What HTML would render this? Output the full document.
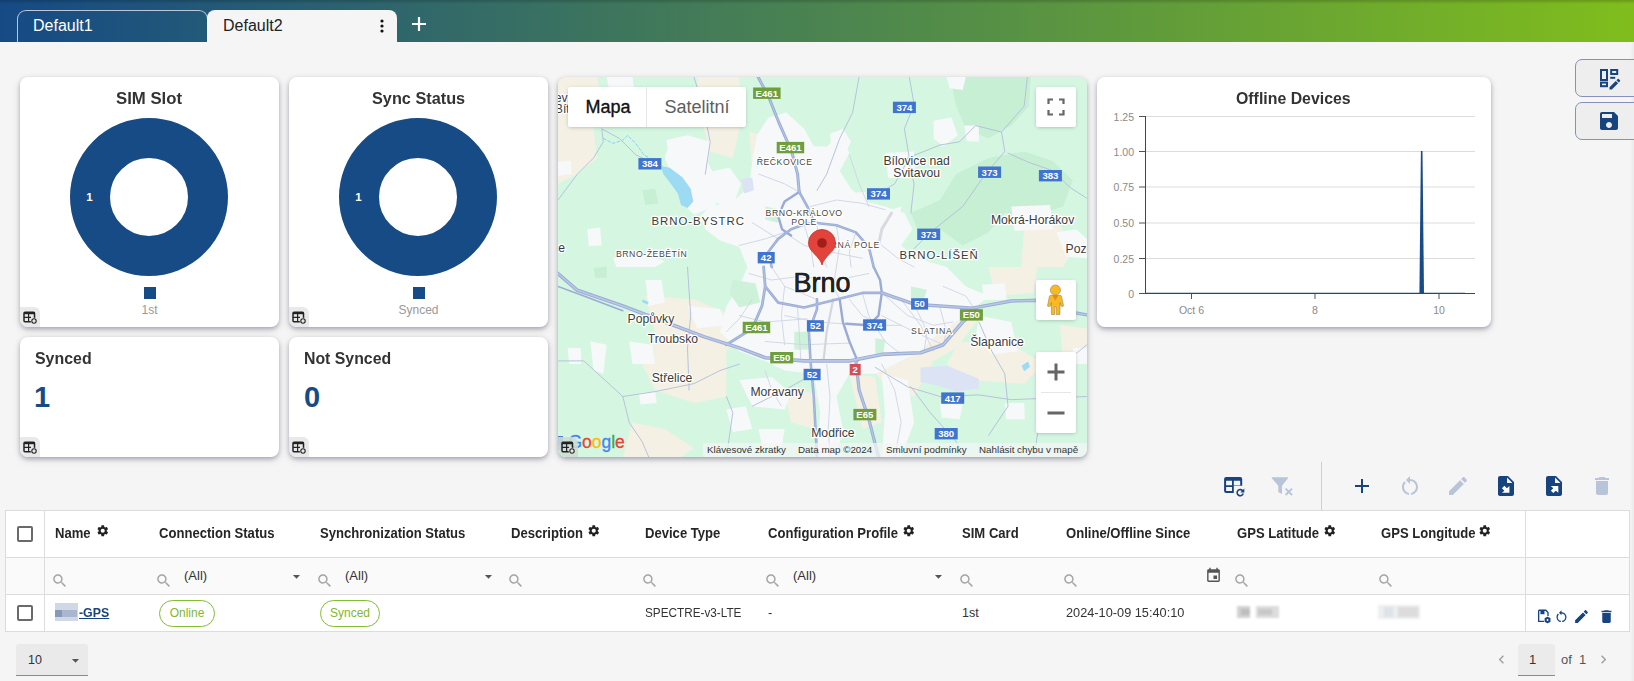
<!DOCTYPE html>
<html lang="en">
<head>
<meta charset="utf-8">
<title>Dashboard</title>
<style>
*{box-sizing:border-box;margin:0;padding:0}
html,body{width:1634px;height:681px;overflow:hidden}
body{background:#f5f5f5;font-family:"Liberation Sans",sans-serif;color:#333;position:relative}
.abs{position:absolute}
.t{position:absolute;white-space:nowrap;line-height:1}
#topbar{position:absolute;left:0;top:0;width:1634px;height:42px;background:linear-gradient(90deg,#154a85,#80bd1c)}
#topshade{position:absolute;left:0;top:0;width:1634px;height:4px;background:linear-gradient(180deg,rgba(0,0,0,.18),rgba(0,0,0,0))}
#tab1{position:absolute;left:17px;top:10px;width:191px;height:32px;border:1px solid #b9c7d9;border-bottom:none;border-radius:9px 9px 0 0}
#tab2{position:absolute;left:207px;top:10px;width:190px;height:33px;background:#f5f5f5;border-radius:8px 8px 0 0}
.card{position:absolute;background:#fff;border-radius:8px;box-shadow:0 2px 4px rgba(60,60,95,.36),0 3px 8px rgba(60,60,95,.13)}
.cico{position:absolute;left:0;bottom:0;width:20px;height:20px;background:#e9e9e9;border-radius:0 6px 0 8px}
.sidebtn{position:absolute;left:1575px;width:62px;height:38px;background:#eeeeee;border:1px solid #8590bd;border-radius:7px 0 0 7px}
#grid{position:absolute;left:5px;top:510px;width:1625px;height:122px;background:#fff;border:1px solid #dcdcdc}
.mctl{position:absolute;background:#fff;border-radius:2px;box-shadow:0 1px 4px -1px rgba(0,0,0,.3)}
.attr{font-size:9.800px;color:#333}
.hl{position:absolute;background:#dddddd}
.hd16{font-weight:bold;font-size:16px;color:#333}
.hd17{font-weight:bold;font-size:17px;color:#333}
.big{font-weight:bold;font-size:29px;color:#174b85}
.hd{font-weight:bold;font-size:14px;color:#262626;transform:scaleX(.934);transform-origin:0 0}
.cell{font-size:12.5px;color:#333}
.badge{position:absolute;height:27px;border:1.5px solid #86bc30;border-radius:14px;color:#7fb72f;font-size:12px;line-height:24px;text-align:center;background:#fff}
</style>
</head>
<body>
<div id="topbar"></div>
<div id="topshade"></div>
<div id="redge" class="abs" style="left:1630px;top:42px;width:4px;height:639px;background:linear-gradient(90deg,rgba(0,0,0,0),rgba(0,0,0,.045))"></div>
<div id="tab1"></div>
<div id="tab2"></div>
<div class="t" id="tx-d1" style="left:33px;top:18px;font-size:16px;color:#fff">Default1</div>
<div class="t" id="tx-d2" style="left:223px;top:18px;font-size:16px;color:#222">Default2</div>
<svg class="abs" style="left:375.500px;top:15.500px" width="12" height="20" viewBox="0 0 12 20"><circle cx="6" cy="5" r="1.6" fill="#111"/><circle cx="6" cy="10" r="1.6" fill="#111"/><circle cx="6" cy="15" r="1.6" fill="#111"/></svg>
<svg class="abs" style="left:410px;top:15px" width="18" height="18" viewBox="0 0 18 18"><path d="M9 2v14M2 9h14" stroke="#fff" stroke-width="2.2" fill="none"/></svg>

<!-- cards -->
<div class="card" id="c-sim" style="left:20px;top:77px;width:259px;height:250px"><div class="cico"><svg class="abs" style="left:3px;top:3.500px" width="15" height="14" viewBox="0 0 15 14"><rect x="1" y="1.2" width="10.5" height="9.6" rx="1" fill="none" stroke="#222" stroke-width="1.5"/><path d="M1 2.2h10.5" stroke="#222" stroke-width="2"/><path d="M1 6.4h7M5.6 2v9" stroke="#222" stroke-width="1.2" fill="none"/><circle cx="11" cy="10" r="3.3" fill="#e8e8e8"/><circle cx="11" cy="10" r="2.2" fill="none" stroke="#222" stroke-width="1.1"/></svg></div></div>
<div class="card" id="c-sync" style="left:289px;top:77px;width:259px;height:250px"><div class="cico"><svg class="abs" style="left:3px;top:3.500px" width="15" height="14" viewBox="0 0 15 14"><rect x="1" y="1.2" width="10.5" height="9.6" rx="1" fill="none" stroke="#222" stroke-width="1.5"/><path d="M1 2.2h10.5" stroke="#222" stroke-width="2"/><path d="M1 6.4h7M5.6 2v9" stroke="#222" stroke-width="1.2" fill="none"/><circle cx="11" cy="10" r="3.3" fill="#e8e8e8"/><circle cx="11" cy="10" r="2.2" fill="none" stroke="#222" stroke-width="1.1"/></svg></div></div>
<div class="card" id="c-synced" style="left:20px;top:337px;width:259px;height:120px"><div class="cico"><svg class="abs" style="left:3px;top:3.500px" width="15" height="14" viewBox="0 0 15 14"><rect x="1" y="1.2" width="10.5" height="9.6" rx="1" fill="none" stroke="#222" stroke-width="1.5"/><path d="M1 2.2h10.5" stroke="#222" stroke-width="2"/><path d="M1 6.4h7M5.6 2v9" stroke="#222" stroke-width="1.2" fill="none"/><circle cx="11" cy="10" r="3.3" fill="#e8e8e8"/><circle cx="11" cy="10" r="2.2" fill="none" stroke="#222" stroke-width="1.1"/></svg></div></div>
<div class="card" id="c-nsynced" style="left:289px;top:337px;width:259px;height:120px"><div class="cico"><svg class="abs" style="left:3px;top:3.500px" width="15" height="14" viewBox="0 0 15 14"><rect x="1" y="1.2" width="10.5" height="9.6" rx="1" fill="none" stroke="#222" stroke-width="1.5"/><path d="M1 2.2h10.5" stroke="#222" stroke-width="2"/><path d="M1 6.4h7M5.6 2v9" stroke="#222" stroke-width="1.2" fill="none"/><circle cx="11" cy="10" r="3.3" fill="#e8e8e8"/><circle cx="11" cy="10" r="2.2" fill="none" stroke="#222" stroke-width="1.1"/></svg></div></div>
<div class="card" id="c-map" style="left:558px;top:77px;width:529px;height:380px;overflow:hidden;background:#d5f7e2">
<!--MAP-->
<svg class="abs" style="left:0;top:0" width="529" height="380" viewBox="0 0 529 380" font-family="Liberation Sans, sans-serif">
<rect x="0" y="0" width="529" height="380" fill="#d5f7e2"/>
<polygon points="391.7,0.0 472.7,0.0 471.1,29.1 453.3,48.6 430.6,61.5 407.9,51.8 398.2,29.1" fill="#c6efd4" />
<polygon points="352.9,136.0 382.0,123.0 398.2,97.1 430.6,80.9 466.2,74.5 495.3,84.2 514.8,103.6 505.1,129.5 475.9,139.2 446.8,136.0 430.6,155.4 404.7,168.4 382.0,152.2 359.4,152.2" fill="#c6efd4" />
<polygon points="84.2,113.3 97.1,111.7 100.4,126.3 87.4,127.9" fill="#c6efd4" />
<polygon points="35.6,191.0 48.6,189.4 48.6,200.7 37.2,200.7" fill="#c6efd4" />
<polygon points="174.8,203.0 197.5,206.2 200.7,225.6 181.3,228.9 171.6,215.9" fill="#c6efd4" />
<polygon points="236.3,254.8 249.3,254.8 249.3,270.9 236.3,270.9" fill="#c6efd4" />
<polygon points="0.0,0.0 38.9,0.0 43.7,19.4 35.6,51.8 38.9,80.9 19.4,97.1 0.0,106.8" fill="#f4f0e4" />
<polygon points="139.2,0.0 181.3,0.0 184.5,38.9 174.8,80.9 152.2,74.5 142.5,38.9" fill="#f4f0e4" />
<polygon points="191.0,55.0 207.2,58.3 213.7,106.8 207.2,129.5 191.0,123.0 194.3,90.7" fill="#f4f0e4" />
<polygon points="466.2,152.2 498.6,145.7 518.0,168.4 505.1,190.0 463.0,190.0" fill="#f4f0e4" />
<polygon points="87.4,219.1 136.0,222.4 174.8,238.6 181.3,254.8 168.4,274.2 168.4,319.5 136.0,326.0 97.1,313.0 84.2,287.1 97.1,254.8" fill="#f4f0e4" />
<polygon points="158.6,238.6 197.5,241.8 207.2,264.5 181.3,267.7" fill="#f4f0e4" />
<polygon points="327.0,232.1 401.5,228.9 420.9,241.8 398.2,270.9 375.6,283.9 356.1,319.5 330.2,313.0 310.8,287.1 304.3,254.8" fill="#f4f0e4" />
<polygon points="401.5,264.5 459.7,270.9 485.6,287.1 466.2,306.6 414.4,303.3 388.5,287.1" fill="#f4f0e4" />
<polygon points="430.6,190.0 479.2,190.0 475.9,215.9 437.1,219.1" fill="#f4f0e4" />
<polygon points="226.6,313.0 259.0,316.3 255.8,351.9 233.1,345.4" fill="#f4f0e4" />
<polygon points="291.4,296.8 317.3,300.1 323.8,345.4 304.3,351.9" fill="#f4f0e4" />
<polygon points="74.5,345.4 106.8,351.9 136.0,371.3 123.0,380.0 64.8,380.0" fill="#f4f0e4" />
<polygon points="501.8,248.3 529.0,251.5 529.0,287.1 505.1,283.9" fill="#f4f0e4" />
<polygon points="189.4,190.0 181.3,170.0 161.9,163.5 147.3,152.2 142.5,139.2 152.2,129.5 174.8,124.6 191.0,110.1 194.3,84.2 199.1,58.3 210.4,40.5 228.2,35.6 246.1,51.8 255.8,69.6 268.7,69.6 281.7,58.3 291.4,76.1 281.7,93.9 293.0,111.7 307.6,124.6 327.0,129.5 346.4,136.0 354.5,152.2 343.2,168.4 359.4,181.3 388.5,190.0" fill="#f7f8f9" />
<polygon points="111.7,64.8 142.5,66.4 152.2,90.7 163.5,106.8 157.0,129.5 136.0,137.6 123.0,124.6 113.3,97.1 106.8,80.9" fill="#f7f8f9" />
<polygon points="55.0,181.3 84.2,174.8 106.8,184.5 97.1,190.0 58.3,190.0" fill="#f7f8f9" />
<polygon points="323.8,136.0 343.2,129.5 339.9,155.4 327.0,161.9" fill="#f7f8f9" />
<polygon points="189.4,190.0 388.5,190.0 407.9,209.4 430.6,219.1 407.9,238.6 382.0,254.8 362.6,274.2 336.7,287.1 317.3,296.8 291.4,296.8 278.4,319.5 284.9,351.9 278.4,380.0 259.0,380.0 262.2,335.7 255.8,296.8 226.6,293.6 207.2,283.9 181.3,274.2 161.9,254.8 168.4,228.9 181.3,209.4" fill="#f7f8f9" />
<polygon points="323.8,296.8 349.7,303.3 356.1,345.4 343.2,380.0 323.8,380.0 327.0,335.7" fill="#f7f8f9" />
<polygon points="420.9,238.6 453.3,245.0 459.7,274.2 433.8,277.4 417.6,261.2" fill="#f7f8f9" />
<polygon points="181.3,303.3 213.7,300.1 233.1,316.3 226.6,332.5 194.3,329.2" fill="#f7f8f9" />
<polygon points="168.4,332.5 187.8,329.2 194.3,351.9 174.8,355.1" fill="#f7f8f9" />
<polygon points="71.2,264.5 93.9,267.7 97.1,287.1 74.5,287.1" fill="#f7f8f9" />
<polygon points="80.9,316.3 97.1,314.6 98.7,326.0 82.6,327.6" fill="#f7f8f9" />
<polygon points="129.5,228.9 161.9,232.1 168.4,248.3 139.2,251.5" fill="#f7f8f9" />
<polygon points="87.4,203.0 103.6,203.0 106.8,225.6 90.7,228.9" fill="#f7f8f9" />
<polygon points="32.4,264.5 48.6,267.7 45.3,296.8 35.6,293.6" fill="#f7f8f9" />
<polygon points="108.5,63.1 129.5,58.3 152.2,64.8 150.5,84.2 129.5,80.9 111.7,84.8" fill="#f7f8f9" />
<polygon points="155.4,93.9 171.6,90.7 182.9,106.8 174.8,129.5 158.6,126.3" fill="#f7f8f9" />
<polygon points="272.0,56.7 284.9,51.8 293.0,64.8 284.9,80.9 273.6,77.7" fill="#f7f8f9" />
<polygon points="375.6,43.7 393.4,40.5 399.8,58.3 385.3,69.6 375.6,61.5" fill="#f7f8f9" />
<polygon points="406.3,48.6 420.9,48.6 420.9,64.8 408.6,64.1" fill="#f7f8f9" />
<polygon points="388.5,0.0 407.9,0.0 404.7,13.0 391.7,11.3" fill="#f7f8f9" />
<polygon points="498.6,155.4 518.0,152.2 529.0,161.9 529.0,181.3 508.3,179.7" fill="#f7f8f9" />
<polygon points="284.9,116.6 307.6,114.9 310.8,136.0 288.1,134.4" fill="#f7f8f9" />
<polygon points="0.0,84.8 13.0,83.5 13.6,97.1 0.0,98.7" fill="#f7f8f9" />
<polygon points="29.1,152.2 42.1,150.5 43.7,168.4 30.8,169.0" fill="#f7f8f9" />
<polygon points="327.0,76.1 356.1,74.5 357.7,100.4 330.2,101.0" fill="#f7f8f9" />
<polygon points="453.3,129.5 492.1,127.9 495.3,152.2 456.5,153.8" fill="#f7f8f9" />
<polygon points="48.6,0.0 74.5,0.0 76.1,13.0 51.8,16.2" fill="#f7f8f9" />
<polygon points="424.1,207.8 446.8,206.2 448.4,222.4 425.7,223.0" fill="#f7f8f9" />
<polygon points="514.8,270.9 529.0,270.9 529.0,287.1 515.4,287.1" fill="#f7f8f9" />
<polygon points="446.8,326.0 466.2,326.0 466.8,342.2 448.1,342.2" fill="#f7f8f9" />
<polygon points="9.7,270.9 22.7,270.9 23.3,287.1 11.0,287.1" fill="#f7f8f9" />
<polygon points="382.0,326.0 404.7,327.6 401.5,342.2 383.6,340.5" fill="#f7f8f9" />
<polygon points="200.7,351.9 226.6,351.9 223.4,371.3 204.0,369.7" fill="#f7f8f9" />
<polygon points="174.8,203.0 197.5,206.2 202.3,225.6 181.3,230.5 171.6,215.9" fill="#cdf2d9" />
<polygon points="236.3,254.8 250.9,254.8 250.9,272.6 236.3,272.6" fill="#cdf2d9" />
<polygon points="207.2,129.5 223.4,132.7 220.2,145.7 207.2,142.5" fill="#cdf2d9" />
<polygon points="352.9,209.4 369.1,212.7 365.8,222.4 352.9,220.8" fill="#cdf2d9" />
<polygon points="317.3,261.2 327.0,262.8 325.4,277.4 317.3,276.8" fill="#cdf2d9" />
<polygon points="103.0,89.0 111.7,90.7 124.6,100.4 132.7,111.7 135.3,124.6 129.5,131.1 123.0,127.9 119.8,116.6 111.7,105.2 105.2,97.1" fill="#9ddaf3" />
<polygon points="362.6,290.4 388.5,288.7 420.9,301.7 420.9,311.4 398.2,314.6 378.8,308.2 362.6,304.9" fill="#dbe3f5" />
<polygon points="182.9,102.0 194.3,100.4 195.9,113.3 186.2,116.6" fill="#dbe3f5" />
<polygon points="463.6,288.7 470.1,284.5 472.0,289.7 466.2,294.2" fill="#9ddaf3" />
<polygon points="84.8,222.4 90.7,225.0 89.4,227.6 83.9,225.0" fill="#9ddaf3" />
<polyline points="45.3,61.5 55.0,66.4 64.8,63.1 69.6,58.3 77.7,66.4 85.8,77.7 97.1,84.8 103.6,89.0" fill="none" stroke="#7cc8ea" stroke-width="0.8" stroke-linejoin="round" stroke-linecap="round" stroke-dasharray="3 2"/>
<polyline points="0.0,123.0 19.4,97.1 35.6,80.9 45.3,64.8 43.7,51.8 61.5,61.5 77.7,77.7 97.1,87.4" fill="none" stroke="#b7c2dc" stroke-width="1" stroke-linejoin="round" stroke-linecap="round" />
<polyline points="320.5,116.6 336.7,106.8 351.3,80.9 346.4,51.8 356.1,27.5 351.3,0.0" fill="none" stroke="#b7c2dc" stroke-width="1" stroke-linejoin="round" stroke-linecap="round" />
<polyline points="356.1,171.6 372.3,155.4 404.7,129.5 427.4,97.1 446.8,74.5 443.5,55.0 417.6,48.6 401.5,64.8 382.0,68.0 349.7,80.9" fill="none" stroke="#b7c2dc" stroke-width="1" stroke-linejoin="round" stroke-linecap="round" />
<polyline points="529.0,121.4 511.5,110.1 495.3,93.9 469.4,84.8 450.0,76.1" fill="none" stroke="#b7c2dc" stroke-width="1" stroke-linejoin="round" stroke-linecap="round" />
<polyline points="443.5,55.0 466.2,29.1 469.4,0.0" fill="none" stroke="#b7c2dc" stroke-width="1" stroke-linejoin="round" stroke-linecap="round" />
<polyline points="301.1,0.0 294.6,35.6 281.7,61.5 268.7,97.1 259.0,113.3" fill="none" stroke="#b7c2dc" stroke-width="1" stroke-linejoin="round" stroke-linecap="round" />
<polyline points="136.0,0.0 145.7,32.4 152.2,64.8 147.3,97.1" fill="none" stroke="#b7c2dc" stroke-width="1" stroke-linejoin="round" stroke-linecap="round" />
<polyline points="349.7,80.9 356.1,106.8 352.9,136.0" fill="none" stroke="#b7c2dc" stroke-width="1" stroke-linejoin="round" stroke-linecap="round" />
<polyline points="317.3,290.4 349.7,309.8 382.0,319.5 420.9,317.9 453.3,322.7 529.0,319.5" fill="none" stroke="#b7c2dc" stroke-width="1" stroke-linejoin="round" stroke-linecap="round" />
<polyline points="352.9,309.8 372.3,335.7 398.2,364.8 407.9,380.0" fill="none" stroke="#b7c2dc" stroke-width="1" stroke-linejoin="round" stroke-linecap="round" />
<polyline points="0.0,283.9 25.9,283.9 64.8,319.5 97.1,314.6 136.0,306.6 161.9,293.6 181.3,287.1" fill="none" stroke="#b7c2dc" stroke-width="1" stroke-linejoin="round" stroke-linecap="round" />
<polyline points="129.5,190.0 132.7,238.6 129.5,270.9 131.1,313.0" fill="none" stroke="#b7c2dc" stroke-width="1" stroke-linejoin="round" stroke-linecap="round" />
<polyline points="64.8,319.5 71.2,345.4 84.2,364.8 90.7,380.0" fill="none" stroke="#b7c2dc" stroke-width="1" stroke-linejoin="round" stroke-linecap="round" />
<polyline points="168.4,319.5 174.8,335.7 168.4,380.0" fill="none" stroke="#b7c2dc" stroke-width="1" stroke-linejoin="round" stroke-linecap="round" />
<polyline points="420.9,245.0 433.8,274.2 446.8,296.8 450.0,329.2 430.6,358.4" fill="none" stroke="#b7c2dc" stroke-width="1" stroke-linejoin="round" stroke-linecap="round" />
<polyline points="529.0,267.7 505.1,287.1 485.6,319.5 475.9,380.0" fill="none" stroke="#b7c2dc" stroke-width="1" stroke-linejoin="round" stroke-linecap="round" />
<polyline points="194.3,329.2 226.6,313.0 255.8,296.8" fill="none" stroke="#b7c2dc" stroke-width="1" stroke-linejoin="round" stroke-linecap="round" />
<polyline points="226.6,155.4 246.1,168.4 272.0,174.8 304.3,181.3" fill="none" stroke="#cdd5e4" stroke-width="0.9" stroke-linejoin="round" stroke-linecap="round" />
<polyline points="246.1,147.3 252.5,168.4 255.8,190.0" fill="none" stroke="#cdd5e4" stroke-width="0.9" stroke-linejoin="round" stroke-linecap="round" />
<polyline points="278.4,148.9 281.7,168.4 278.4,190.0" fill="none" stroke="#cdd5e4" stroke-width="0.9" stroke-linejoin="round" stroke-linecap="round" />
<polyline points="194.3,145.7 220.2,161.9" fill="none" stroke="#cdd5e4" stroke-width="0.9" stroke-linejoin="round" stroke-linecap="round" />
<polyline points="213.7,190.0 226.6,209.4 259.0,222.4" fill="none" stroke="#cdd5e4" stroke-width="0.9" stroke-linejoin="round" stroke-linecap="round" />
<polyline points="278.4,190.0 275.2,209.4 281.7,222.4" fill="none" stroke="#cdd5e4" stroke-width="0.9" stroke-linejoin="round" stroke-linecap="round" />
<polyline points="226.6,238.6 259.0,245.0 284.9,246.7" fill="none" stroke="#cdd5e4" stroke-width="0.9" stroke-linejoin="round" stroke-linecap="round" />
<polyline points="207.2,264.5 246.1,267.7 291.4,266.1" fill="none" stroke="#cdd5e4" stroke-width="0.9" stroke-linejoin="round" stroke-linecap="round" />
<polyline points="323.8,238.6 356.1,254.8 385.3,267.7" fill="none" stroke="#cdd5e4" stroke-width="0.9" stroke-linejoin="round" stroke-linecap="round" />
<polyline points="343.2,222.4 362.6,248.3 375.6,274.2" fill="none" stroke="#cdd5e4" stroke-width="0.9" stroke-linejoin="round" stroke-linecap="round" />
<polyline points="181.3,238.6 207.2,245.0 249.3,241.8" fill="none" stroke="#cdd5e4" stroke-width="0.9" stroke-linejoin="round" stroke-linecap="round" />
<polyline points="200.7,97.1 226.6,106.8 241.2,114.9" fill="none" stroke="#cdd5e4" stroke-width="0.9" stroke-linejoin="round" stroke-linecap="round" />
<polyline points="252.5,129.5 278.4,123.0 304.3,126.3 327.0,132.7" fill="none" stroke="#cdd5e4" stroke-width="0.9" stroke-linejoin="round" stroke-linecap="round" />
<polyline points="291.4,77.7 301.1,106.8 310.8,129.5" fill="none" stroke="#cdd5e4" stroke-width="0.9" stroke-linejoin="round" stroke-linecap="round" />
<polyline points="259.0,148.9 262.2,171.6 268.7,190.0" fill="none" stroke="#cdd5e4" stroke-width="0.9" stroke-linejoin="round" stroke-linecap="round" />
<polyline points="297.9,155.4 291.4,174.8 293.0,190.0" fill="none" stroke="#cdd5e4" stroke-width="0.9" stroke-linejoin="round" stroke-linecap="round" />
<polyline points="181.3,168.4 207.2,161.9 226.6,155.4" fill="none" stroke="#cdd5e4" stroke-width="0.9" stroke-linejoin="round" stroke-linecap="round" />
<polyline points="323.8,168.4 339.9,181.3 356.1,190.0" fill="none" stroke="#cdd5e4" stroke-width="0.9" stroke-linejoin="round" stroke-linecap="round" />
<polyline points="191.0,196.5 213.7,203.0 239.6,199.7 278.4,203.0 310.8,196.5" fill="none" stroke="#cdd5e4" stroke-width="0.9" stroke-linejoin="round" stroke-linecap="round" />
<polyline points="194.3,222.4 181.3,241.8 168.4,254.8" fill="none" stroke="#cdd5e4" stroke-width="0.9" stroke-linejoin="round" stroke-linecap="round" />
<polyline points="226.6,209.4 223.4,238.6 226.6,267.7" fill="none" stroke="#cdd5e4" stroke-width="0.9" stroke-linejoin="round" stroke-linecap="round" />
<polyline points="239.6,230.5 241.2,254.8 242.8,283.9" fill="none" stroke="#cdd5e4" stroke-width="0.9" stroke-linejoin="round" stroke-linecap="round" />
<polyline points="291.4,222.4 304.3,238.6 323.8,248.3 343.2,248.3" fill="none" stroke="#cdd5e4" stroke-width="0.9" stroke-linejoin="round" stroke-linecap="round" />
<polyline points="304.3,215.9 310.8,238.6 327.0,264.5 343.2,277.4" fill="none" stroke="#cdd5e4" stroke-width="0.9" stroke-linejoin="round" stroke-linecap="round" />
<polyline points="323.8,215.9 349.7,238.6 375.6,248.3 395.0,245.0" fill="none" stroke="#cdd5e4" stroke-width="0.9" stroke-linejoin="round" stroke-linecap="round" />
<polyline points="356.1,227.2 369.1,254.8 365.8,275.8" fill="none" stroke="#cdd5e4" stroke-width="0.9" stroke-linejoin="round" stroke-linecap="round" />
<polyline points="382.0,230.5 388.5,254.8 385.3,267.7" fill="none" stroke="#cdd5e4" stroke-width="0.9" stroke-linejoin="round" stroke-linecap="round" />
<polyline points="268.7,287.1 272.0,319.5 270.3,351.9 272.0,380.0" fill="none" stroke="#cdd5e4" stroke-width="0.9" stroke-linejoin="round" stroke-linecap="round" />
<polyline points="323.8,287.1 336.7,313.0 343.2,345.4 336.7,380.0" fill="none" stroke="#cdd5e4" stroke-width="0.9" stroke-linejoin="round" stroke-linecap="round" />
<polyline points="207.2,293.6 213.7,313.0 223.4,329.2" fill="none" stroke="#cdd5e4" stroke-width="0.9" stroke-linejoin="round" stroke-linecap="round" />
<polyline points="385.3,209.4 407.9,219.1 417.6,233.7" fill="none" stroke="#cdd5e4" stroke-width="0.9" stroke-linejoin="round" stroke-linecap="round" />
<polyline points="275.2,222.4 268.7,254.8 265.5,283.9" fill="none" stroke="#d3d6dc" stroke-width="2.2" stroke-linejoin="round" stroke-linecap="round" />
<polyline points="333.5,136.0 323.8,152.2 320.5,168.4" fill="none" stroke="#d8dadf" stroke-width="3" stroke-linejoin="round" stroke-linecap="round" />
<polyline points="200.1,0.0 210.4,19.4 220.8,45.3 233.7,74.5 239.6,97.1 241.2,114.9" fill="none" stroke="#9aacd6" stroke-width="3" stroke-linejoin="round" stroke-linecap="round" />
<polyline points="241.2,114.9 226.6,124.6 220.2,139.2 224.0,152.2 233.1,158.6" fill="none" stroke="#9aacd6" stroke-width="2.4" stroke-linejoin="round" stroke-linecap="round" />
<polyline points="241.2,114.9 249.3,129.5 256.4,145.7 278.4,148.3 297.9,155.4 310.8,170.0 315.7,190.0" fill="none" stroke="#9aacd6" stroke-width="2.6" stroke-linejoin="round" stroke-linecap="round" />
<polyline points="213.7,190.0 210.4,174.8 220.2,161.9 233.1,152.2 246.7,147.3 259.0,145.7" fill="none" stroke="#9aacd6" stroke-width="2.6" stroke-linejoin="round" stroke-linecap="round" />
<polyline points="315.7,190.0 322.1,203.0 323.8,215.9 320.5,238.6 310.8,248.3 288.1,246.7" fill="none" stroke="#9aacd6" stroke-width="2.4" stroke-linejoin="round" stroke-linecap="round" />
<polyline points="0.0,196.5 19.4,213.3 64.8,228.9 106.8,245.0 145.7,259.6 181.3,270.9 207.2,280.7 246.1,283.9 291.4,283.9 323.8,277.4 362.6,275.8 385.3,267.7 404.7,245.0 417.6,233.7" fill="none" stroke="#9aacd6" stroke-width="3.6" stroke-linejoin="round" stroke-linecap="round" />
<polyline points="323.8,215.9 356.1,227.2 414.4,231.1 453.3,224.0 479.2,223.3 505.1,233.7 529.0,237.9" fill="none" stroke="#9aacd6" stroke-width="3.4" stroke-linejoin="round" stroke-linecap="round" />
<polyline points="168.4,267.7 194.3,251.5 204.0,228.9 207.2,209.4 205.6,190.0" fill="none" stroke="#9aacd6" stroke-width="2.8" stroke-linejoin="round" stroke-linecap="round" />
<polyline points="207.2,209.4 220.2,225.6 246.1,230.5 278.4,222.4 304.3,215.9 323.8,215.9" fill="none" stroke="#9aacd6" stroke-width="2.6" stroke-linejoin="round" stroke-linecap="round" />
<polyline points="259.0,380.0 255.8,319.5 252.5,283.9 250.9,254.8 259.0,232.1 259.0,222.4" fill="none" stroke="#9aacd6" stroke-width="2.6" stroke-linejoin="round" stroke-linecap="round" />
<polyline points="281.7,222.4 284.9,245.0 291.4,264.5 299.5,283.9" fill="none" stroke="#9aacd6" stroke-width="2.4" stroke-linejoin="round" stroke-linecap="round" />
<polyline points="297.9,283.9 301.1,313.0 310.8,342.2 320.5,380.0" fill="none" stroke="#9aacd6" stroke-width="3.2" stroke-linejoin="round" stroke-linecap="round" />
<polyline points="0.0,209.4 25.9,219.1 64.8,233.7" fill="none" stroke="#9aacd6" stroke-width="1.6" stroke-linejoin="round" stroke-linecap="round" />
<polyline points="200.1,0.0 210.4,19.4 220.8,45.3 233.7,74.5 239.6,97.1 241.2,114.9" fill="none" stroke="#bac7e5" stroke-width="1" stroke-linejoin="round" stroke-linecap="round" />
<polyline points="241.2,114.9 249.3,129.5 256.4,145.7 278.4,148.3 297.9,155.4 310.8,170.0 315.7,190.0" fill="none" stroke="#bac7e5" stroke-width="0.6000000000000001" stroke-linejoin="round" stroke-linecap="round" />
<polyline points="213.7,190.0 210.4,174.8 220.2,161.9 233.1,152.2 246.7,147.3 259.0,145.7" fill="none" stroke="#bac7e5" stroke-width="0.6000000000000001" stroke-linejoin="round" stroke-linecap="round" />
<polyline points="0.0,196.5 19.4,213.3 64.8,228.9 106.8,245.0 145.7,259.6 181.3,270.9 207.2,280.7 246.1,283.9 291.4,283.9 323.8,277.4 362.6,275.8 385.3,267.7 404.7,245.0 417.6,233.7" fill="none" stroke="#bac7e5" stroke-width="1.6" stroke-linejoin="round" stroke-linecap="round" />
<polyline points="323.8,215.9 356.1,227.2 414.4,231.1 453.3,224.0 479.2,223.3 505.1,233.7 529.0,237.9" fill="none" stroke="#bac7e5" stroke-width="1.4" stroke-linejoin="round" stroke-linecap="round" />
<polyline points="168.4,267.7 194.3,251.5 204.0,228.9 207.2,209.4 205.6,190.0" fill="none" stroke="#bac7e5" stroke-width="0.7999999999999998" stroke-linejoin="round" stroke-linecap="round" />
<polyline points="207.2,209.4 220.2,225.6 246.1,230.5 278.4,222.4 304.3,215.9 323.8,215.9" fill="none" stroke="#bac7e5" stroke-width="0.6000000000000001" stroke-linejoin="round" stroke-linecap="round" />
<polyline points="259.0,380.0 255.8,319.5 252.5,283.9 250.9,254.8 259.0,232.1 259.0,222.4" fill="none" stroke="#bac7e5" stroke-width="0.6000000000000001" stroke-linejoin="round" stroke-linecap="round" />
<polyline points="297.9,283.9 301.1,313.0 310.8,342.2 320.5,380.0" fill="none" stroke="#bac7e5" stroke-width="1.2000000000000002" stroke-linejoin="round" stroke-linecap="round" />
<rect x="195.1" y="10.5" width="27.5" height="11.4" fill="#6f9e3c"/><text x="208.8" y="19.7" font-size="9.6" font-weight="bold" fill="#fff" text-anchor="middle">E461</text>
<rect x="218.7" y="64.9" width="27.5" height="11.4" fill="#6f9e3c"/><text x="232.5" y="74.1" font-size="9.6" font-weight="bold" fill="#fff" text-anchor="middle">E461</text>
<rect x="80.4" y="81.1" width="23" height="11.4" fill="#3f74cf"/><text x="91.9" y="90.3" font-size="9.6" font-weight="bold" fill="#fff" text-anchor="middle">384</text>
<rect x="334.9" y="24.7" width="23" height="11.4" fill="#3f74cf"/><text x="346.4" y="33.9" font-size="9.6" font-weight="bold" fill="#fff" text-anchor="middle">374</text>
<rect x="309.0" y="111.2" width="23" height="11.4" fill="#3f74cf"/><text x="320.5" y="120.4" font-size="9.6" font-weight="bold" fill="#fff" text-anchor="middle">374</text>
<rect x="420.1" y="89.5" width="23" height="11.4" fill="#3f74cf"/><text x="431.6" y="98.7" font-size="9.6" font-weight="bold" fill="#fff" text-anchor="middle">373</text>
<rect x="480.9" y="93.0" width="23" height="11.4" fill="#3f74cf"/><text x="492.4" y="102.2" font-size="9.6" font-weight="bold" fill="#fff" text-anchor="middle">383</text>
<rect x="359.2" y="151.6" width="23" height="11.4" fill="#3f74cf"/><text x="370.7" y="160.8" font-size="9.6" font-weight="bold" fill="#fff" text-anchor="middle">373</text>
<rect x="199.7" y="175.0" width="17" height="11.4" fill="#3f74cf"/><text x="208.2" y="184.2" font-size="9.6" font-weight="bold" fill="#fff" text-anchor="middle">42</text>
<rect x="353.1" y="221.2" width="17" height="11.4" fill="#3f74cf"/><text x="361.6" y="230.4" font-size="9.6" font-weight="bold" fill="#fff" text-anchor="middle">50</text>
<rect x="401.9" y="232.2" width="23" height="11.4" fill="#6f9e3c"/><text x="413.4" y="241.4" font-size="9.6" font-weight="bold" fill="#fff" text-anchor="middle">E50</text>
<rect x="184.7" y="244.8" width="27.5" height="11.4" fill="#6f9e3c"/><text x="198.5" y="254.0" font-size="9.6" font-weight="bold" fill="#fff" text-anchor="middle">E461</text>
<rect x="248.9" y="243.2" width="17" height="11.4" fill="#3f74cf"/><text x="257.4" y="252.4" font-size="9.6" font-weight="bold" fill="#fff" text-anchor="middle">52</text>
<rect x="305.1" y="242.3" width="23" height="11.4" fill="#3f74cf"/><text x="316.6" y="251.5" font-size="9.6" font-weight="bold" fill="#fff" text-anchor="middle">374</text>
<rect x="212.2" y="275.0" width="23" height="11.4" fill="#6f9e3c"/><text x="223.7" y="284.2" font-size="9.6" font-weight="bold" fill="#fff" text-anchor="middle">E50</text>
<rect x="245.6" y="291.8" width="17" height="11.4" fill="#3f74cf"/><text x="254.1" y="301.0" font-size="9.6" font-weight="bold" fill="#fff" text-anchor="middle">52</text>
<rect x="291.7" y="286.9" width="11" height="11.4" fill="#d0505a"/><text x="297.2" y="296.1" font-size="9.6" font-weight="bold" fill="#fff" text-anchor="middle">2</text>
<rect x="383.2" y="315.4" width="23" height="11.4" fill="#3f74cf"/><text x="394.7" y="324.6" font-size="9.6" font-weight="bold" fill="#fff" text-anchor="middle">417</text>
<rect x="295.4" y="331.9" width="23" height="11.4" fill="#6f9e3c"/><text x="306.9" y="341.1" font-size="9.6" font-weight="bold" fill="#fff" text-anchor="middle">E65</text>
<rect x="376.7" y="351.0" width="23" height="11.4" fill="#3f74cf"/><text x="388.2" y="360.2" font-size="9.6" font-weight="bold" fill="#fff" text-anchor="middle">380</text>
<text x="226.6" y="88.0" font-size="8.7" font-weight="normal" fill="#464646" text-anchor="middle" letter-spacing="0.5" stroke="#fff" stroke-width="2.4" stroke-linejoin="round" paint-order="stroke">ŘEČKOVICE</text>
<text x="358.7" y="87.6" font-size="12.2" font-weight="normal" fill="#3c3c3c" text-anchor="middle" letter-spacing="0" stroke="#fff" stroke-width="2.4" stroke-linejoin="round" paint-order="stroke">Bílovice nad</text>
<text x="358.7" y="99.6" font-size="12.2" font-weight="normal" fill="#3c3c3c" text-anchor="middle" letter-spacing="0" stroke="#fff" stroke-width="2.4" stroke-linejoin="round" paint-order="stroke">Svitavou</text>
<text x="140.2" y="147.8" font-size="11.4" font-weight="normal" fill="#3a3a3a" text-anchor="middle" letter-spacing="0.95" stroke="#fff" stroke-width="2.4" stroke-linejoin="round" paint-order="stroke">BRNO-BYSTRC</text>
<text x="246.1" y="138.8" font-size="8.7" font-weight="normal" fill="#464646" text-anchor="middle" letter-spacing="0.6" stroke="#fff" stroke-width="2.4" stroke-linejoin="round" paint-order="stroke">BRNO-KRÁLOVO</text>
<text x="246.1" y="147.8" font-size="8.7" font-weight="normal" fill="#464646" text-anchor="middle" letter-spacing="0.6" stroke="#fff" stroke-width="2.4" stroke-linejoin="round" paint-order="stroke">POLE</text>
<text x="93.6" y="180.2" font-size="8.7" font-weight="normal" fill="#464646" text-anchor="middle" letter-spacing="0.55" stroke="#fff" stroke-width="2.4" stroke-linejoin="round" paint-order="stroke">BRNO-ŽEBĚTÍN</text>
<text x="381.1" y="181.8" font-size="11.4" font-weight="normal" fill="#3a3a3a" text-anchor="middle" letter-spacing="0.95" stroke="#fff" stroke-width="2.4" stroke-linejoin="round" paint-order="stroke">BRNO-LÍŠEŇ</text>
<text x="474.6" y="147.2" font-size="12.2" font-weight="normal" fill="#3c3c3c" text-anchor="middle" letter-spacing="0" stroke="#fff" stroke-width="2.4" stroke-linejoin="round" paint-order="stroke">Mokrá-Horákov</text>
<text x="92.9" y="245.5" font-size="12.2" font-weight="normal" fill="#3c3c3c" text-anchor="middle" letter-spacing="0" stroke="#fff" stroke-width="2.4" stroke-linejoin="round" paint-order="stroke">Popůvky</text>
<text x="114.9" y="266.3" font-size="12.2" font-weight="normal" fill="#3c3c3c" text-anchor="middle" letter-spacing="0" stroke="#fff" stroke-width="2.4" stroke-linejoin="round" paint-order="stroke">Troubsko</text>
<text x="114.0" y="305.4" font-size="12.2" font-weight="normal" fill="#3c3c3c" text-anchor="middle" letter-spacing="0" stroke="#fff" stroke-width="2.4" stroke-linejoin="round" paint-order="stroke">Střelice</text>
<text x="219.2" y="319.4" font-size="12.2" font-weight="normal" fill="#3c3c3c" text-anchor="middle" letter-spacing="0" stroke="#fff" stroke-width="2.4" stroke-linejoin="round" paint-order="stroke">Moravany</text>
<text x="274.9" y="359.5" font-size="12.2" font-weight="normal" fill="#3c3c3c" text-anchor="middle" letter-spacing="0" stroke="#fff" stroke-width="2.4" stroke-linejoin="round" paint-order="stroke">Modřice</text>
<text x="373.9" y="256.9" font-size="8.7" font-weight="normal" fill="#464646" text-anchor="middle" letter-spacing="0.9" stroke="#fff" stroke-width="2.4" stroke-linejoin="round" paint-order="stroke">SLATINA</text>
<text x="439.0" y="268.5" font-size="12.2" font-weight="normal" fill="#3c3c3c" text-anchor="middle" letter-spacing="0" stroke="#fff" stroke-width="2.4" stroke-linejoin="round" paint-order="stroke">Šlapanice</text>
<text x="263.9" y="214.9" font-size="27" font-weight="normal" fill="#222" text-anchor="middle" letter-spacing="0" stroke="#fff" stroke-width="2.4" stroke-linejoin="round" paint-order="stroke">Brno</text>
<text x="263.9" y="214.9" font-size="27" fill="#222" stroke="#222" stroke-width="0.55" text-anchor="middle">Brno</text>
<text x="259.0" y="171.2" font-size="8.7" font-weight="normal" fill="#464646" text-anchor="start" letter-spacing="0.7" stroke="#fff" stroke-width="2.4" stroke-linejoin="round" paint-order="stroke">ČERNÁ POLE</text>
<text x="507.6" y="176.3" font-size="12.2" font-weight="normal" fill="#3c3c3c" text-anchor="start" letter-spacing="0" stroke="#fff" stroke-width="2.4" stroke-linejoin="round" paint-order="stroke">Pozořice</text>
<text x="9.7" y="24.5" font-size="12.2" font-weight="normal" fill="#3c3c3c" text-anchor="end" letter-spacing="0" stroke="#fff" stroke-width="2.4" stroke-linejoin="round" paint-order="stroke">ev</text>
<text x="11.7" y="35.8" font-size="12.2" font-weight="normal" fill="#3c3c3c" text-anchor="end" letter-spacing="0" stroke="#fff" stroke-width="2.4" stroke-linejoin="round" paint-order="stroke">Bít</text>
<text x="7.1" y="175.0" font-size="12.2" font-weight="normal" fill="#3c3c3c" text-anchor="end" letter-spacing="0" stroke="#fff" stroke-width="2.4" stroke-linejoin="round" paint-order="stroke">ce</text>
<g transform="translate(264,188)"><path d="M0 0C-2 -9 -13.500 -13 -13.500 -22A13.500 13.500 0 0 1 13.500 -22C13.500 -13 2 -9 0 0Z" fill="#e2433a" stroke="#c5322b" stroke-width="0.800"/><circle cx="0" cy="-22" r="4.800" fill="#a41e18"/></g>
</svg>
<div class="mctl" style="left:10px;top:10px;width:178px;height:40px"></div>
<div class="abs" style="left:88px;top:10px;width:1px;height:40px;background:#e6e6e6"></div>
<div class="t" style="left:27.500px;top:21px;font-size:18px;color:#111;-webkit-text-stroke:0.35px #111">Mapa</div>
<div class="t" style="left:106.500px;top:21px;font-size:18px;color:#5e5e5e">Satelitní</div>
<div class="mctl" style="left:478px;top:10px;width:40px;height:40px"><svg class="abs" style="left:11px;top:11px" width="18" height="18" viewBox="0 0 18 18"><path d="M1.500 6V1.500H6M12 1.500h4.500V6M16.500 12v4.500H12M6 16.500H1.500V12" fill="none" stroke="#666" stroke-width="2.200"/></svg></div>
<div class="mctl" style="left:478px;top:203px;width:40px;height:40px"><svg class="abs" style="left:0;top:0" width="40" height="40" viewBox="0 0 40 40"><path d="M14.300 15.500H24.500C25.100 15.500 25.400 15.900 25.500 16.400L27.500 25.500Q27.600 26.500 26.500 26.400L25.100 26.200 24 22.600V34.500H20.200V26.800H18.700V34.500H15.400V22.600L14.300 26.200 12.600 26.400Q11.400 26.500 11.600 25.500L13.400 16.400C13.500 15.900 13.800 15.500 14.300 15.500Z" fill="#f9b923" stroke="#8a7440" stroke-width="0.500"/><path d="M16.500 15.600H22.300L19.400 20.600Z" fill="#e18a2c"/><circle cx="19.400" cy="10.100" r="5.100" fill="#f9b923" stroke="#8a7440" stroke-width="0.500"/></svg></div>
<div class="mctl" style="left:478px;top:275px;width:40px;height:81px"></div>
<div class="abs" style="left:483px;top:315px;width:30px;height:1px;background:#e6e6e6"></div>
<svg class="abs" style="left:488px;top:285px" width="20" height="20" viewBox="0 0 20 20"><path d="M10 1.500v17M1.500 10h17" stroke="#666" stroke-width="3"/></svg>
<svg class="abs" style="left:488px;top:326px" width="20" height="20" viewBox="0 0 20 20"><path d="M1.500 10h17" stroke="#666" stroke-width="3"/></svg>
<div class="abs" style="left:145px;top:366px;width:384px;height:14px;background:rgba(245,245,245,.72)"></div>
<div class="t attr" style="left:149px;top:368px">Klávesové zkratky</div>
<div class="t attr" style="left:240px;top:368px">Data map ©2024</div>
<div class="t attr" style="left:328px;top:368px">Smluvní podmínky</div>
<div class="t attr" style="left:421px;top:368px">Nahlásit chybu v mapě</div>
<div class="t" style="left:10.500px;top:356.500px;font-size:17.500px;letter-spacing:-0.050px;-webkit-text-stroke:0.300px"><span style="color:#4285f4">G</span><span style="color:#ea4335">o</span><span style="color:#fbbc05">o</span><span style="color:#4285f4">g</span><span style="color:#34a853">l</span><span style="color:#ea4335">e</span></div>
<div class="abs" style="left:0;top:359px;width:4.500px;height:9px;background:#4a80d6"></div><div class="abs" style="left:0;top:368px;width:4.500px;height:5px;background:#8fb0e4"></div><div class="cico" style="background:rgba(205,220,210,.88)"><svg class="abs" style="left:3px;top:3.500px" width="15" height="14" viewBox="0 0 15 14"><rect x="1" y="1.2" width="10.5" height="9.6" rx="1" fill="none" stroke="#222" stroke-width="1.5"/><path d="M1 2.2h10.5" stroke="#222" stroke-width="2"/><path d="M1 6.4h7M5.6 2v9" stroke="#222" stroke-width="1.2" fill="none"/><circle cx="11" cy="10" r="3.3" fill="#e8e8e8"/><circle cx="11" cy="10" r="2.2" fill="none" stroke="#222" stroke-width="1.1"/></svg></div>
<!--/MAP-->
</div>
<div class="card" id="c-off" style="left:1097px;top:77px;width:394px;height:250px"></div>


<div class="t hd17" style="left:116.300px;top:90px;transform:scaleX(.985);transform-origin:0 0">SIM Slot</div>
<svg class="abs" style="left:69px;top:117px" width="160" height="160" viewBox="0 0 160 160"><circle cx="80" cy="80" r="59" fill="none" stroke="#174b85" stroke-width="40"/><text x="20.5" y="83.600" font-family="Liberation Sans, sans-serif" font-weight="bold" font-size="11.5" fill="#fff" text-anchor="middle">1</text></svg>
<div class="abs" style="left:144.0px;top:287px;width:12px;height:12px;background:#174b85"></div>
<div class="t" style="left:89.5px;width:120px;text-align:center;top:304px;font-size:12px;color:#999">1st</div>
<div class="t hd17" style="left:372.300px;top:90px;transform:scaleX(.957);transform-origin:0 0">Sync Status</div>
<svg class="abs" style="left:338px;top:117px" width="160" height="160" viewBox="0 0 160 160"><circle cx="80" cy="80" r="59" fill="none" stroke="#174b85" stroke-width="40"/><text x="20.5" y="83.600" font-family="Liberation Sans, sans-serif" font-weight="bold" font-size="11.5" fill="#fff" text-anchor="middle">1</text></svg>
<div class="abs" style="left:413.0px;top:287px;width:12px;height:12px;background:#174b85"></div>
<div class="t" style="left:358.5px;width:120px;text-align:center;top:304px;font-size:12px;color:#999">Synced</div>
<div class="t hd16" style="left:34.500px;top:350.500px;transform:scaleX(.995);transform-origin:0 0">Synced</div>
<div class="t big" style="left:34px;top:383px">1</div>
<div class="t hd16" style="left:304px;top:351px;transform:scaleX(.99);transform-origin:0 0">Not Synced</div>
<div class="t big" style="left:304px;top:383px">0</div>
<div class="t hd17" style="left:1236px;top:90px;transform:scaleX(.933);transform-origin:0 0">Offline Devices</div>
<svg class="abs" style="left:1097px;top:77px" width="394" height="250" viewBox="1097 77 394 250" font-family="Liberation Sans, sans-serif" font-size="10.5" fill="#8a8a8a"><path d="M1146 116.500H1475" stroke="#dcdcdc" stroke-width="1"/><path d="M1139 116.500H1146" stroke="#555" stroke-width="1"/><text x="1134" y="120.500" text-anchor="end">1.25</text><path d="M1146 151.5H1475" stroke="#dcdcdc" stroke-width="1"/><path d="M1139 151.5H1146" stroke="#555" stroke-width="1"/><text x="1134" y="155.5" text-anchor="end">1.00</text><path d="M1146 187H1475" stroke="#dcdcdc" stroke-width="1"/><path d="M1139 187H1146" stroke="#555" stroke-width="1"/><text x="1134" y="191" text-anchor="end">0.75</text><path d="M1146 223H1475" stroke="#dcdcdc" stroke-width="1"/><path d="M1139 223H1146" stroke="#555" stroke-width="1"/><text x="1134" y="227" text-anchor="end">0.50</text><path d="M1146 258.5H1475" stroke="#dcdcdc" stroke-width="1"/><path d="M1139 258.5H1146" stroke="#555" stroke-width="1"/><text x="1134" y="262.5" text-anchor="end">0.25</text><path d="M1139 293.5H1146" stroke="#555" stroke-width="1"/><text x="1134" y="297.5" text-anchor="end">0</text><path d="M1145.5 116V294" stroke="#444" stroke-width="1"/><path d="M1145 293.5H1475" stroke="#444" stroke-width="1"/><path d="M1146 293.300H1465" stroke="#174b85" stroke-width="1.200"/><path d="M1419.400 294L1420.900 151H1422.500L1424 294Z" fill="#174b85"/><path d="M1191.5 294V299" stroke="#555" stroke-width="1"/><text x="1191.5" y="314" text-anchor="middle">Oct 6</text><path d="M1315 294V299" stroke="#555" stroke-width="1"/><text x="1315" y="314" text-anchor="middle">8</text><path d="M1439 294V299" stroke="#555" stroke-width="1"/><text x="1439" y="314" text-anchor="middle">10</text></svg>
<div class="sidebtn" style="top:59px"></div>
<div class="sidebtn" style="top:102px"></div>

<svg class="abs" style="left:1598px;top:67px" width="24" height="24" viewBox="0 0 24 24"><g fill="none" stroke="#17437f" stroke-width="2"><rect x="3" y="3" width="6" height="10"/><rect x="3" y="15.600" width="6" height="3.600"/><rect x="13.200" y="3" width="6" height="4"/><path d="M12.200 10.800h5"/></g><path d="M11.500 20.200v2.300h2.300l6.300-6.300-2.300-2.300zM22 14.300l-1.200 1.200-2.300-2.300 1.200-1.200c.3-.3.700-.3 1 0l1.300 1.300c.3.300.3.700 0 1z" fill="#17437f"/></svg>
<svg class="abs" style="left:1597.0px;top:109.0px" width="24" height="24" viewBox="0 0 24 24"><path d="M17 3H5c-1.11 0-2 .9-2 2v14c0 1.1.89 2 2 2h14c1.1 0 2-.9 2-2V7l-4-4zm-5 16c-1.66 0-3-1.34-3-3s1.340-3 3-3 3 1.340 3 3-1.340 3-3 3zm3-10H5V5h10v4z" fill="#17437f"/></svg>
<!-- toolbar -->
<svg class="abs" style="left:1222px;top:474px" width="24" height="24" viewBox="0 0 24 24"><path fill-rule="evenodd" d="M4.100 3h14.100a2 2 0 0 1 2 2v6.800h-8.400v7.200H4.100a2 2 0 0 1-2-2V5a2 2 0 0 1 2-2zM4.100 6.800v4.400h5.900V6.800zM11.800 6.800v4.400h6.400V6.800zM4.100 13v4.100h5.900V13z" fill="#17437f"/><path d="M21 17.300a3.100 3.100 0 1 0 .2 2.200" fill="none" stroke="#17437f" stroke-width="1.600"/><path d="M22.300 14.600v3.900h-3.900z" fill="#17437f"/></svg>
<svg class="abs" style="left:1270px;top:474px" width="24" height="24" viewBox="0 0 24 24"><path d="M2.300 3.200h15.200c.5 0 .8.600.5 1L12 11.800v8.200l-3.700-2v-6.200L1.800 4.200c-.3-.4 0-1 .5-1z" fill="#b8c4d7"/><path d="M15.600 14.600l6.400 6.400M22 14.600l-6.400 6.400" stroke="#b8c4d7" stroke-width="1.800" fill="none"/></svg>
<div class="abs" style="left:1321px;top:462px;width:1px;height:49px;background:#d0d0d0"></div>
<svg class="abs" style="left:1350.0px;top:474.0px" width="24" height="24" viewBox="0 0 24 24"><path d="M19 13h-6v6h-2v-6H5v-2h6V5h2v6h6v2z" fill="#17437f"/></svg>
<svg class="abs" style="left:1398.0px;top:474.0px" width="24" height="24" viewBox="0 0 24 24"><path d="M12 5V2L8 6l4 4V7c3.31 0 6 2.69 6 6 0 2.97-2.17 5.43-5 5.91v2.02c3.95-.49 7-3.85 7-7.930 0-4.42-3.58-8-8-8zM6 13c0-1.65.67-3.15 1.76-4.24L6.340 7.340C4.900 8.790 4 10.790 4 13c0 4.080 3.050 7.440 7 7.930v-2.020c-2.830-.48-5-2.940-5-5.910z" fill="#b8c4d7"/></svg>
<svg class="abs" style="left:1446.0px;top:474.0px" width="24" height="24" viewBox="0 0 24 24"><path d="M3 17.25V21h3.75L17.81 9.94l-3.75-3.75L3 17.25zM20.71 7.04c.39-.39.39-1.02 0-1.41l-2.34-2.34c-.39-.39-1.02-.39-1.41 0l-1.83 1.83 3.75 3.75 1.83-1.83z" fill="#b8c4d7"/></svg>
<svg class="abs" style="left:1494.0px;top:474.0px" width="24" height="24" viewBox="0 0 24 24"><path d="M6 2c-1.1 0-1.990.9-1.990 2L4 20c0 1.100.89 2 1.990 2H18c1.100 0 2-.9 2-2V8l-6-6H6zm7 7V3.500L18.500 9H13z" fill="#17437f"/><path d="M15.400 12.100V18.700H7.900L10.400 16.640 7.900 14.200 10.400 11.700 12.900 14.160Z" fill="#fff"/></svg>
<svg class="abs" style="left:1542.0px;top:474.0px" width="24" height="24" viewBox="0 0 24 24"><path d="M6 2c-1.1 0-1.990.9-1.990 2L4 20c0 1.100.89 2 1.990 2H18c1.100 0 2-.9 2-2V8l-6-6H6zm7 7V3.500L18.500 9H13z" fill="#17437f"/><path d="M8.800 12.100H16.300V18.700L13.800 16.640 11.330 19.100 8.830 16.630 11.300 14.160Z" fill="#fff"/></svg>
<svg class="abs" style="left:1590.0px;top:474.0px" width="24" height="24" viewBox="0 0 24 24"><path d="M6 19c0 1.1.9 2 2 2h8c1.1 0 2-.9 2-2V7H6v12zM19 4h-3.5l-1-1h-5l-1 1H5v2h14V4z" fill="#b8c4d7"/></svg>
<div id="grid"></div>
<!-- grid -->
<div class="abs" style="left:6px;top:558px;width:1623px;height:36px;background:#fafafa"></div>
<div class="hl" style="left:6px;top:557px;width:1623px;height:1px"></div>
<div class="hl" style="left:6px;top:594px;width:1623px;height:1px"></div>
<div class="hl" style="left:44px;top:511px;width:1px;height:120px"></div>
<div class="hl" style="left:1525px;top:511px;width:1px;height:120px"></div>
<div class="abs" style="left:17px;top:525.5px;width:16px;height:16px;border:2px solid #6a6a6a;border-radius:2px;background:#fff"></div>
<div class="abs" style="left:17px;top:605px;width:16px;height:16px;border:2px solid #6a6a6a;border-radius:2px;background:#fff"></div>
<div class="t hd" id="h0" style="left:55px;top:526px">Name</div>
<svg class="abs" style="left:51.3px;top:571.500px" width="17.500" height="17.500" viewBox="0 0 24 24"><path d="M15.5 14h-.79l-.28-.27C15.41 12.59 16 11.11 16 9.500 16 5.910 13.090 3 9.500 3S3 5.910 3 9.500 5.910 16 9.500 16c1.610 0 3.090-.59 4.230-1.570l.27.280v.79l5 4.990L20.490 19l-4.990-5zm-6 0C7.010 14 5 11.990 5 9.500S7.010 5 9.500 5 14 7.010 14 9.500 11.990 14 9.500 14z" fill="#a6a6a6"/></svg>
<div class="t hd" id="h1" style="left:159px;top:526px">Connection Status</div>
<svg class="abs" style="left:155.3px;top:571.500px" width="17.500" height="17.500" viewBox="0 0 24 24"><path d="M15.5 14h-.79l-.28-.27C15.41 12.59 16 11.11 16 9.500 16 5.910 13.090 3 9.500 3S3 5.910 3 9.500 5.910 16 9.500 16c1.610 0 3.090-.59 4.230-1.570l.27.280v.79l5 4.990L20.490 19l-4.990-5zm-6 0C7.010 14 5 11.990 5 9.500S7.010 5 9.500 5 14 7.010 14 9.500 11.990 14 9.500 14z" fill="#a6a6a6"/></svg>
<div class="t hd" id="h2" style="left:320px;top:526px">Synchronization Status</div>
<svg class="abs" style="left:316.3px;top:571.500px" width="17.500" height="17.500" viewBox="0 0 24 24"><path d="M15.5 14h-.79l-.28-.27C15.41 12.59 16 11.11 16 9.500 16 5.910 13.090 3 9.500 3S3 5.910 3 9.500 5.910 16 9.500 16c1.610 0 3.090-.59 4.230-1.570l.27.280v.79l5 4.990L20.490 19l-4.990-5zm-6 0C7.010 14 5 11.990 5 9.500S7.010 5 9.500 5 14 7.010 14 9.500 11.990 14 9.500 14z" fill="#a6a6a6"/></svg>
<div class="t hd" id="h3" style="left:511px;top:526px">Description</div>
<svg class="abs" style="left:507.3px;top:571.500px" width="17.500" height="17.500" viewBox="0 0 24 24"><path d="M15.5 14h-.79l-.28-.27C15.41 12.59 16 11.11 16 9.500 16 5.910 13.090 3 9.500 3S3 5.910 3 9.500 5.910 16 9.500 16c1.610 0 3.090-.59 4.230-1.570l.27.280v.79l5 4.990L20.490 19l-4.990-5zm-6 0C7.010 14 5 11.990 5 9.500S7.010 5 9.500 5 14 7.010 14 9.500 11.990 14 9.500 14z" fill="#a6a6a6"/></svg>
<div class="t hd" id="h4" style="left:645px;top:526px">Device Type</div>
<svg class="abs" style="left:641.3px;top:571.500px" width="17.500" height="17.500" viewBox="0 0 24 24"><path d="M15.5 14h-.79l-.28-.27C15.41 12.59 16 11.11 16 9.500 16 5.910 13.090 3 9.500 3S3 5.910 3 9.500 5.910 16 9.500 16c1.610 0 3.090-.59 4.230-1.570l.27.280v.79l5 4.990L20.490 19l-4.990-5zm-6 0C7.010 14 5 11.990 5 9.500S7.010 5 9.500 5 14 7.010 14 9.500 11.990 14 9.500 14z" fill="#a6a6a6"/></svg>
<div class="t hd" id="h5" style="left:768px;top:526px">Configuration Profile</div>
<svg class="abs" style="left:764.3px;top:571.500px" width="17.500" height="17.500" viewBox="0 0 24 24"><path d="M15.5 14h-.79l-.28-.27C15.41 12.59 16 11.11 16 9.500 16 5.910 13.090 3 9.500 3S3 5.910 3 9.500 5.910 16 9.500 16c1.610 0 3.090-.59 4.230-1.570l.27.280v.79l5 4.990L20.490 19l-4.990-5zm-6 0C7.010 14 5 11.990 5 9.500S7.010 5 9.500 5 14 7.010 14 9.500 11.990 14 9.500 14z" fill="#a6a6a6"/></svg>
<div class="t hd" id="h6" style="left:962px;top:526px">SIM Card</div>
<svg class="abs" style="left:958.3px;top:571.500px" width="17.500" height="17.500" viewBox="0 0 24 24"><path d="M15.5 14h-.79l-.28-.27C15.41 12.59 16 11.11 16 9.500 16 5.910 13.090 3 9.500 3S3 5.910 3 9.500 5.910 16 9.500 16c1.610 0 3.090-.59 4.230-1.570l.27.280v.79l5 4.990L20.490 19l-4.990-5zm-6 0C7.010 14 5 11.990 5 9.500S7.010 5 9.500 5 14 7.010 14 9.500 11.990 14 9.500 14z" fill="#a6a6a6"/></svg>
<div class="t hd" id="h7" style="left:1066px;top:526px">Online/Offline Since</div>
<svg class="abs" style="left:1062.3px;top:571.500px" width="17.500" height="17.500" viewBox="0 0 24 24"><path d="M15.5 14h-.79l-.28-.27C15.41 12.59 16 11.11 16 9.500 16 5.910 13.090 3 9.500 3S3 5.910 3 9.500 5.910 16 9.500 16c1.610 0 3.090-.59 4.230-1.570l.27.280v.79l5 4.990L20.490 19l-4.990-5zm-6 0C7.010 14 5 11.990 5 9.500S7.010 5 9.500 5 14 7.010 14 9.500 11.990 14 9.500 14z" fill="#a6a6a6"/></svg>
<div class="t hd" id="h8" style="left:1237px;top:526px">GPS Latitude</div>
<svg class="abs" style="left:1233.3px;top:571.500px" width="17.500" height="17.500" viewBox="0 0 24 24"><path d="M15.5 14h-.79l-.28-.27C15.41 12.59 16 11.11 16 9.500 16 5.910 13.090 3 9.500 3S3 5.910 3 9.500 5.910 16 9.500 16c1.610 0 3.090-.59 4.230-1.570l.27.280v.79l5 4.990L20.490 19l-4.990-5zm-6 0C7.010 14 5 11.990 5 9.500S7.010 5 9.500 5 14 7.010 14 9.500 11.990 14 9.500 14z" fill="#a6a6a6"/></svg>
<div class="t hd" id="h9" style="left:1381px;top:526px">GPS Longitude</div>
<svg class="abs" style="left:1377.3px;top:571.500px" width="17.500" height="17.500" viewBox="0 0 24 24"><path d="M15.5 14h-.79l-.28-.27C15.41 12.59 16 11.11 16 9.500 16 5.910 13.090 3 9.500 3S3 5.910 3 9.500 5.910 16 9.500 16c1.610 0 3.090-.59 4.230-1.570l.27.280v.79l5 4.990L20.490 19l-4.990-5zm-6 0C7.010 14 5 11.990 5 9.500S7.010 5 9.500 5 14 7.010 14 9.500 11.990 14 9.500 14z" fill="#a6a6a6"/></svg>
<svg class="abs" style="left:96px;top:524px" width="13.5" height="13.5" viewBox="0 0 24 24"><path d="M19.14 12.94c.04-.3.06-.61.06-.94 0-.32-.02-.64-.07-.94l2.030-1.580c.18-.14.23-.41.12-.61l-1.920-3.320c-.12-.22-.37-.29-.59-.22l-2.390.96c-.5-.38-1.030-.7-1.620-.94l-.36-2.540c-.04-.24-.24-.41-.48-.41h-3.840c-.24 0-.43.17-.47.41l-.36 2.540c-.59.24-1.130.57-1.620.94l-2.390-.96c-.22-.08-.47 0-.59.22L2.740 8.870c-.12.21-.08.47.12.61l2.030 1.580c-.05.3-.09.63-.09.94s.02.64.07.94l-2.030 1.580c-.18.14-.23.41-.12.61l1.920 3.320c.12.22.37.29.59.22l2.390-.96c.5.38 1.030.7 1.620.94l.36 2.540c.05.24.24.41.48.41h3.840c.24 0 .44-.17.47-.41l.36-2.540c.59-.24 1.130-.56 1.620-.94l2.390.96c.22.08.47 0 .59-.22l1.920-3.320c.12-.22.07-.47-.12-.61l-2.010-1.580zM12 15.600c-1.980 0-3.600-1.620-3.600-3.600s1.620-3.600 3.600-3.600 3.600 1.620 3.600 3.600-1.620 3.600-3.600 3.600z" fill="#222"/></svg>
<svg class="abs" style="left:587px;top:524px" width="13.5" height="13.5" viewBox="0 0 24 24"><path d="M19.14 12.94c.04-.3.06-.61.06-.94 0-.32-.02-.64-.07-.94l2.030-1.580c.18-.14.23-.41.12-.61l-1.920-3.320c-.12-.22-.37-.29-.59-.22l-2.390.96c-.5-.38-1.030-.7-1.620-.94l-.36-2.540c-.04-.24-.24-.41-.48-.41h-3.840c-.24 0-.43.17-.47.41l-.36 2.540c-.59.24-1.130.57-1.620.94l-2.390-.96c-.22-.08-.47 0-.59.22L2.740 8.870c-.12.21-.08.47.12.61l2.030 1.580c-.05.3-.09.63-.09.94s.02.64.07.94l-2.030 1.580c-.18.14-.23.41-.12.61l1.920 3.320c.12.22.37.29.59.22l2.390-.96c.5.38 1.030.7 1.620.94l.36 2.540c.05.24.24.41.48.41h3.840c.24 0 .44-.17.47-.41l.36-2.540c.59-.24 1.130-.56 1.620-.94l2.390.96c.22.08.47 0 .59-.22l1.920-3.320c.12-.22.07-.47-.12-.61l-2.010-1.580zM12 15.600c-1.980 0-3.600-1.620-3.600-3.600s1.620-3.600 3.600-3.600 3.600 1.620 3.600 3.600-1.620 3.600-3.600 3.600z" fill="#222"/></svg>
<svg class="abs" style="left:902px;top:524px" width="13.5" height="13.5" viewBox="0 0 24 24"><path d="M19.14 12.94c.04-.3.06-.61.06-.94 0-.32-.02-.64-.07-.94l2.030-1.580c.18-.14.23-.41.12-.61l-1.920-3.320c-.12-.22-.37-.29-.59-.22l-2.390.96c-.5-.38-1.030-.7-1.620-.94l-.36-2.540c-.04-.24-.24-.41-.48-.41h-3.840c-.24 0-.43.17-.47.41l-.36 2.540c-.59.24-1.130.57-1.620.94l-2.390-.96c-.22-.08-.47 0-.59.22L2.740 8.870c-.12.21-.08.47.12.61l2.030 1.580c-.05.3-.09.63-.09.94s.02.64.07.94l-2.030 1.580c-.18.14-.23.41-.12.61l1.920 3.320c.12.22.37.29.59.22l2.390-.96c.5.38 1.030.7 1.620.94l.36 2.540c.05.24.24.41.48.41h3.840c.24 0 .44-.17.47-.41l.36-2.540c.59-.24 1.130-.56 1.620-.94l2.390.96c.22.08.47 0 .59-.22l1.920-3.320c.12-.22.07-.47-.12-.61l-2.010-1.580zM12 15.600c-1.980 0-3.600-1.620-3.600-3.600s1.620-3.600 3.600-3.600 3.600 1.620 3.600 3.600-1.620 3.600-3.600 3.600z" fill="#222"/></svg>
<svg class="abs" style="left:1323px;top:524px" width="13.5" height="13.5" viewBox="0 0 24 24"><path d="M19.14 12.94c.04-.3.06-.61.06-.94 0-.32-.02-.64-.07-.94l2.030-1.580c.18-.14.23-.41.12-.61l-1.920-3.320c-.12-.22-.37-.29-.59-.22l-2.390.96c-.5-.38-1.030-.7-1.620-.94l-.36-2.540c-.04-.24-.24-.41-.48-.41h-3.840c-.24 0-.43.17-.47.41l-.36 2.540c-.59.24-1.130.57-1.620.94l-2.390-.96c-.22-.08-.47 0-.59.22L2.740 8.870c-.12.21-.08.47.12.61l2.030 1.580c-.05.3-.09.63-.09.94s.02.64.07.94l-2.030 1.580c-.18.14-.23.41-.12.61l1.920 3.320c.12.22.37.29.59.22l2.390-.96c.5.38 1.030.7 1.620.94l.36 2.540c.05.24.24.41.48.41h3.840c.24 0 .44-.17.47-.41l.36-2.540c.59-.24 1.130-.56 1.620-.94l2.390.96c.22.08.47 0 .59-.22l1.920-3.320c.12-.22.07-.47-.12-.61l-2.010-1.580zM12 15.600c-1.980 0-3.600-1.620-3.600-3.600s1.620-3.600 3.600-3.600 3.600 1.620 3.600 3.600-1.620 3.600-3.600 3.600z" fill="#222"/></svg>
<svg class="abs" style="left:1478px;top:524px" width="13.5" height="13.5" viewBox="0 0 24 24"><path d="M19.14 12.94c.04-.3.06-.61.06-.94 0-.32-.02-.64-.07-.94l2.030-1.580c.18-.14.23-.41.12-.61l-1.920-3.320c-.12-.22-.37-.29-.59-.22l-2.390.96c-.5-.38-1.030-.7-1.620-.94l-.36-2.540c-.04-.24-.24-.41-.48-.41h-3.840c-.24 0-.43.17-.47.41l-.36 2.540c-.59.24-1.130.57-1.620.94l-2.390-.96c-.22-.08-.47 0-.59.22L2.740 8.870c-.12.21-.08.47.12.61l2.030 1.580c-.05.3-.09.63-.09.94s.02.64.07.94l-2.030 1.580c-.18.14-.23.41-.12.61l1.920 3.320c.12.22.37.29.59.22l2.390-.96c.5.38 1.030.7 1.620.94l.36 2.540c.05.24.24.41.48.41h3.840c.24 0 .44-.17.47-.41l.36-2.540c.59-.24 1.130-.56 1.620-.94l2.390.96c.22.08.47 0 .59-.22l1.920-3.320c.12-.22.07-.47-.12-.61l-2.010-1.580zM12 15.600c-1.980 0-3.600-1.620-3.600-3.600s1.620-3.600 3.600-3.600 3.600 1.620 3.600 3.600-1.620 3.600-3.600 3.600z" fill="#222"/></svg>
<div class="t" style="left:184px;top:569px;font-size:13px;color:#333">(All)</div>
<svg class="abs" style="left:287.5px;top:568.300px" width="17" height="17" viewBox="0 0 24 24"><path d="M7 10l5 5 5-5z" fill="#555"/></svg>
<div class="t" style="left:345px;top:569px;font-size:13px;color:#333">(All)</div>
<svg class="abs" style="left:479.5px;top:568.300px" width="17" height="17" viewBox="0 0 24 24"><path d="M7 10l5 5 5-5z" fill="#555"/></svg>
<div class="t" style="left:793px;top:569px;font-size:13px;color:#333">(All)</div>
<svg class="abs" style="left:929.5px;top:568.300px" width="17" height="17" viewBox="0 0 24 24"><path d="M7 10l5 5 5-5z" fill="#555"/></svg>
<svg class="abs" style="left:1204.5px;top:567px" width="17" height="17" viewBox="0 0 24 24"><path d="M17 12h-5v5h5v-5zM16 1v2H8V1H6v2H5c-1.11 0-1.990.9-1.990 2L3 19c0 1.100.89 2 2 2h14c1.100 0 2-.9 2-2V5c0-1.100-.9-2-2-2h-1V1h-2zm3 18H5V8h14v11z" fill="#555"/></svg>
<div class="abs" style="left:55px;top:603px;width:23px;height:18px;background:#cfd8e6"></div><div class="abs" style="left:55px;top:610px;width:22px;height:7px;background:linear-gradient(90deg,#8798b8 0,#8798b8 30%,#a9b6cd 30%,#a9b6cd 100%)"></div>
<div class="t" style="left:78.500px;top:606px;font-size:13px;font-weight:bold;color:#17437f;text-decoration:underline;transform:scaleX(.95);transform-origin:0 0">-GPS</div>
<div class="badge" style="left:159px;top:599.500px;width:56px">Online</div>
<div class="badge" style="left:320px;top:599.500px;width:60px">Synced</div>
<div class="t cell" id="r1" style="left:645px;top:606.500px;transform:scaleX(.94);transform-origin:0 0">SPECTRE-v3-LTE</div>
<div class="t cell" style="left:768px;top:606.500px">-</div>
<div class="t cell" style="left:962px;top:606.500px">1st</div>
<div class="t cell" id="r2" style="left:1066px;top:606.500px;transform:scaleX(1.02);transform-origin:0 0">2024-10-09 15:40:10</div>
<div class="abs" style="left:1237px;top:604px;width:190px;height:16px;filter:blur(1.200px)"><div class="abs" style="left:0;top:2px;width:13px;height:12px;background:#d2d2d2"></div><div class="abs" style="left:4px;top:5px;width:9px;height:6px;background:#bdbdbd"></div><div class="abs" style="left:19px;top:2px;width:23px;height:12px;background:#dcdcdc"></div><div class="abs" style="left:21px;top:5px;width:14px;height:6px;background:#c8c8c8"></div>
<div class="abs" style="left:141px;top:1px;width:42px;height:14px;background:#eceef0"></div><div class="abs" style="left:147px;top:3px;width:9px;height:10px;background:#dde3e8"></div><div class="abs" style="left:161px;top:3px;width:20px;height:10px;background:#dcdcdc"></div></div>
<svg class="abs" style="left:1536.300px;top:608.300px" width="16" height="16" viewBox="0 0 18 18"><path d="M3 2.500h8l2.500 2.500v4" fill="none" stroke="#17437f" stroke-width="1.500"/><path d="M3 2.500v12.500h6" fill="none" stroke="#17437f" stroke-width="1.500"/><rect x="5" y="2.500" width="4.500" height="4.500" fill="#17437f"/><circle cx="13" cy="13.500" r="2.400" fill="none" stroke="#17437f" stroke-width="1.800"/><path d="M13 9.800v7.400M9.800 11.700l6.400 3.600M9.800 15.300l6.400-3.600" stroke="#17437f" stroke-width="1.300"/><circle cx="13" cy="13.500" r="1" fill="#fff"/></svg>
<svg class="abs" style="left:1553.500px;top:608.600px" width="15" height="15" viewBox="0 0 24 24"><path d="M12 5V2L8 6l4 4V7c3.31 0 6 2.69 6 6 0 2.97-2.17 5.43-5 5.91v2.02c3.95-.49 7-3.85 7-7.930 0-4.42-3.58-8-8-8zM6 13c0-1.65.67-3.15 1.76-4.24L6.340 7.340C4.900 8.790 4 10.790 4 13c0 4.080 3.050 7.440 7 7.930v-2.020c-2.830-.48-5-2.940-5-5.910z" fill="#17437f"/></svg>
<svg class="abs" style="left:1573.400px;top:608.300px" width="17" height="17" viewBox="0 0 24 24"><path d="M3 17.25V21h3.75L17.81 9.94l-3.75-3.75L3 17.25zM20.71 7.04c.39-.39.39-1.02 0-1.41l-2.34-2.34c-.39-.39-1.02-.39-1.41 0l-1.83 1.83 3.75 3.75 1.83-1.83z" fill="#17437f"/></svg>
<svg class="abs" style="left:1597.500px;top:608.100px" width="17" height="17" viewBox="0 0 24 24"><path d="M6 19c0 1.1.9 2 2 2h8c1.1 0 2-.9 2-2V7H6v12zM19 4h-3.5l-1-1h-5l-1 1H5v2h14V4z" fill="#17437f"/></svg>
<div class="abs" style="left:16px;top:644px;width:72px;height:32px;background:#eaeaea;border-bottom:1px solid #8a8a8a;border-radius:3px 3px 0 0"></div>
<div class="t" style="left:28px;top:653.500px;font-size:12.500px;color:#333">10</div>
<svg class="abs" style="left:66.500px;top:652.300px" width="17" height="17" viewBox="0 0 24 24"><path d="M7 10l5 5 5-5z" fill="#555"/></svg>
<div class="abs" style="left:1518px;top:644px;width:37px;height:32px;background:#ebebeb;border-bottom:1px solid #8a8a8a;border-radius:3px 3px 0 0"></div>
<div class="t" style="left:1529px;top:653px;font-size:13px;color:#333">1</div>
<div class="t" style="left:1561px;top:653px;font-size:13px;color:#555">of</div><div class="t" style="left:1579px;top:653px;font-size:13px;color:#555">1</div>
<svg class="abs" style="left:1492.5px;top:651px" width="17" height="17" viewBox="0 0 24 24"><path d="M15.41 7.41L14 6l-6 6 6 6 1.410-1.410L10.830 12z" fill="#a0a0a0"/></svg>
<svg class="abs" style="left:1594.5px;top:651px" width="17" height="17" viewBox="0 0 24 24"><path d="M10 6L8.590 7.410 13.170 12l-4.580 4.590L10 18l6-6z" fill="#a0a0a0"/></svg>
<!--gridend-->
</body>
</html>
